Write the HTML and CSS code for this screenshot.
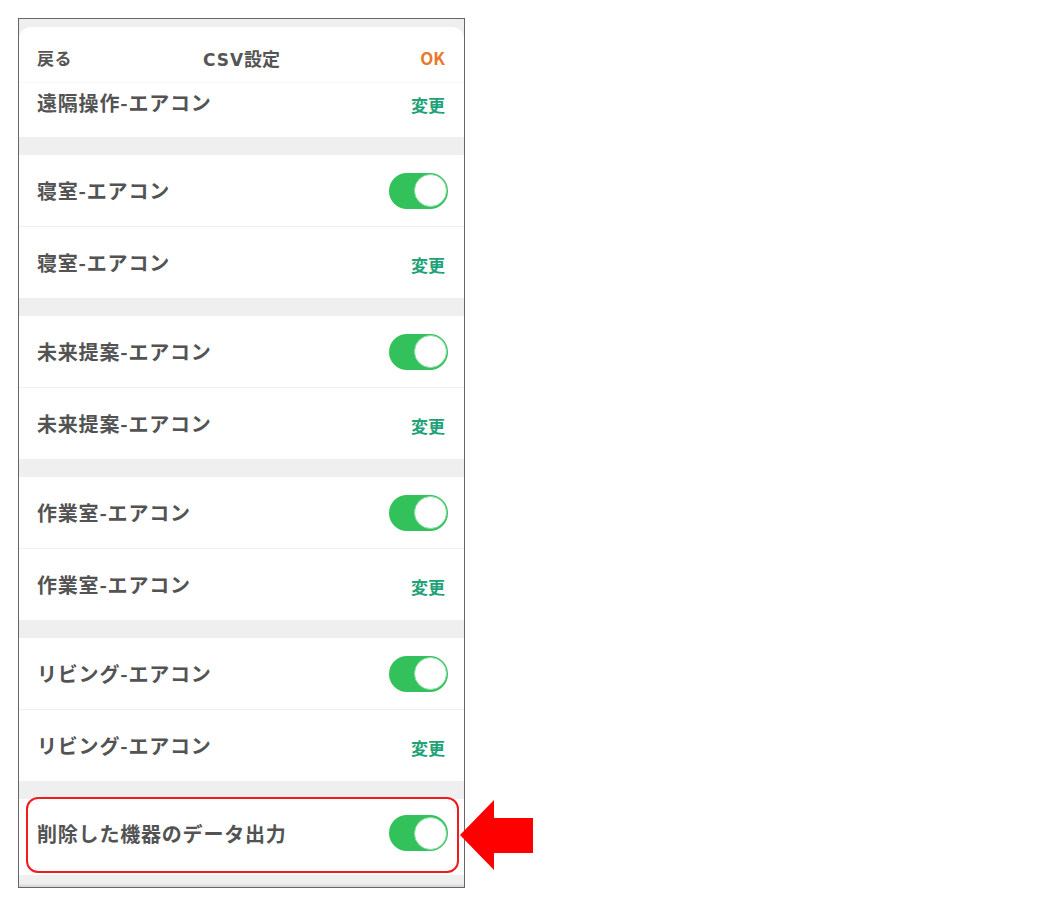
FILE: index.html
```html
<!DOCTYPE html>
<html lang="ja">
<head>
<meta charset="utf-8">
<title>CSV設定</title>
<link rel="stylesheet" href="styles.css">
</head>
<body>
<div class="page">
  <div class="phone">
    <div class="sheet">
      <header class="nav">
        <span class="nav-back">戻る</span>
        <span class="nav-title"><span class="latin">CSV</span>設定</span>
        <span class="nav-ok">OK</span>
      </header>
      <div class="row row-first">
        <span class="label">遠隔操作-エアコン</span>
        <span class="change">変更</span>
      </div>
    </div>

    <section class="group">
      <div class="row"><span class="label">寝室-エアコン</span><span class="switch"><span class="knob"></span></span></div>
      <div class="row"><span class="label">寝室-エアコン</span><span class="change">変更</span></div>
    </section>

    <section class="group">
      <div class="row"><span class="label">未来提案-エアコン</span><span class="switch"><span class="knob"></span></span></div>
      <div class="row"><span class="label">未来提案-エアコン</span><span class="change">変更</span></div>
    </section>

    <section class="group">
      <div class="row"><span class="label">作業室-エアコン</span><span class="switch"><span class="knob"></span></span></div>
      <div class="row"><span class="label">作業室-エアコン</span><span class="change">変更</span></div>
    </section>

    <section class="group">
      <div class="row"><span class="label">リビング-エアコン</span><span class="switch"><span class="knob"></span></span></div>
      <div class="row"><span class="label">リビング-エアコン</span><span class="change">変更</span></div>
    </section>

    <section class="group group-last">
      <div class="row row-last"><span class="label">削除した機器のデータ出力</span><span class="switch"><span class="knob"></span></span></div>
      <div class="highlight"></div>
    </section>
  </div>

  <svg class="arrow" width="74" height="72" viewBox="0 0 74 72" aria-hidden="true">
    <polygon points="0,35 34,0 34,18 73,18 73,53 34,53 34,70" fill="#ff0000"/>
  </svg>
</div>
</body>
</html>
```

FILE: styles.css
```css
html, body {
  margin: 0;
  padding: 0;
  background: #ffffff;
}

body {
  font-family: "Noto Sans CJK JP", "Noto Sans", sans-serif;
  color: #505050;
}

.page {
  position: relative;
  width: 1058px;
  height: 906px;
  padding: 18px 0 0 18px;
  box-sizing: border-box;
}

.phone {
  width: 447px;
  height: 870px;
  box-sizing: border-box;
  border: 1px solid #666666;
  background: #efefef;
  padding-top: 8px;
  display: flex;
  flex-direction: column;
  gap: 18px;
  overflow: hidden;
  box-shadow: inset 0 -3px 2px -1px #d6d6d6;
}

.sheet {
  background: #ffffff;
  border-radius: 12px 12px 0 0;
  display: flex;
  flex-direction: column;
}

.nav {
  height: 56px;
  display: grid;
  grid-template-columns: 1fr auto 1fr;
  align-items: center;
  padding: 0 18px;
  font-weight: 700;
  border-bottom: 1px solid #f7f7f7;
  box-sizing: border-box;
}

.nav-back {
  font-size: 17px;
  color: #555555;
  justify-self: start;
  padding-top: 6px;
  letter-spacing: 0.5px;
}

.nav-title {
  font-size: 18px;
  color: #555555;
  padding-top: 6px;
}

.latin {
  font-family: "DejaVu Sans", "Noto Sans", sans-serif;
  font-size: 17px;
  letter-spacing: 1px;
}

.nav-ok {
  justify-self: end;
  font-size: 17px;
  color: #e8782a;
  padding-top: 6px;
  padding-right: 1px;
}

.group {
  position: relative;
  background: #ffffff;
  display: flex;
  flex-direction: column;
  flex: none;
}

.row {
  height: 71px;
  display: flex;
  align-items: center;
  justify-content: space-between;
  padding: 0 16px 0 18px;
  box-sizing: border-box;
  flex: none;
}

.row + .row {
  border-top: 1px solid #f0f0f0;
  height: 72px;
}

.row-first {
  height: 54px;
  padding-bottom: 16px;
}

.row-last {
  height: 76px;
  padding-bottom: 8px;
}

.label {
  font-size: 20px;
  font-weight: 700;
  color: #535353;
  letter-spacing: 0.8px;
}

.change {
  font-size: 17px;
  font-weight: 700;
  color: #1fa277;
  margin-right: 3px;
  padding-top: 4px;
}

.switch {
  width: 59px;
  height: 36px;
  border-radius: 18px;
  background: #33c15b;
  display: flex;
  align-items: center;
  justify-content: flex-end;
  padding: 0 1px;
  box-sizing: border-box;
  flex: none;
}

.knob {
  width: 33px;
  height: 33px;
  border-radius: 50%;
  background: #ffffff;
  border: 1.5px solid #8edca5;
  box-sizing: border-box;
}

.highlight {
  position: absolute;
  top: -2px;
  left: 7px;
  right: 5px;
  height: 76px;
  border: 2px solid #ee1c1c;
  border-radius: 12px;
  box-sizing: border-box;
  pointer-events: none;
}

.arrow {
  position: absolute;
  left: 460px;
  top: 800px;
  display: block;
}
```
